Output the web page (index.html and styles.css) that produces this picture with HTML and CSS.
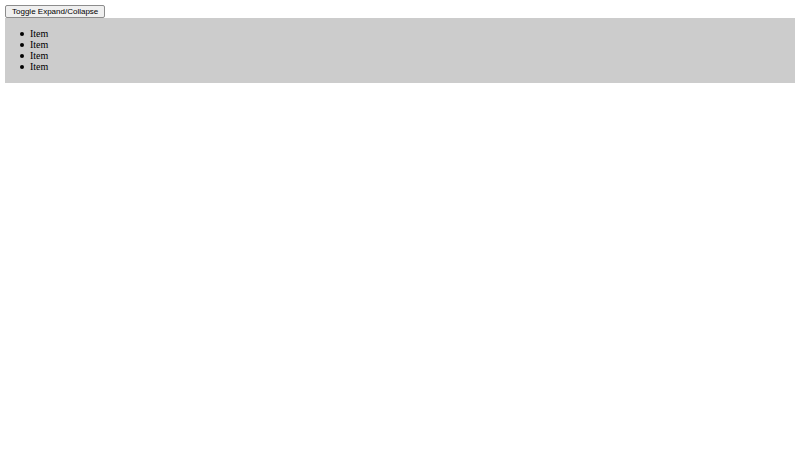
FILE: index.html
```html
<!DOCTYPE html>
<html lang="en">
<head>
    <meta charset="UTF-8">
    <meta name="viewport" content="width=device-width, initial-scale=1.0">
    <title>Expand/Collapse</title>
    <link rel="stylesheet" href="styles.css">
</head>
<body>
    <button type="button" class="toggle" aria-expanded="true" aria-controls="panel" onclick="togglePanel(this)">Toggle Expand/Collapse</button>
    <div class="panel" id="panel">
        <ul class="list">
            <li>Item</li>
            <li>Item</li>
            <li>Item</li>
            <li>Item</li>
        </ul>
    </div>

    <script>
        function togglePanel(button) {
            const panel = document.getElementById('panel');
            panel.hidden = !panel.hidden;
            button.setAttribute('aria-expanded', String(!panel.hidden));
        }
    </script>
</body>
</html>
```
FILE: styles.css
```css
body {
    margin: 5px;
    background: #fff;
    color: #000;
    font-family: "Liberation Serif", "Times New Roman", serif;
    font-size: 10px;
    line-height: 11px;
}

.toggle {
    display: block;
    padding: 1px 6px;
    border: 1px solid #8c8c8c;
    border-radius: 2px;
    background: #efefef;
    color: #000;
    font-family: "Liberation Sans", Arial, sans-serif;
    font-size: 8px;
    line-height: 9px;
}

.panel {
    overflow: hidden;
    background: #ccc;
}

.list {
    margin: 10px 0 11px;
    padding-left: 15px;
    list-style: none;
}

.list li {
    display: flex;
    align-items: center;
    gap: 6px;
}

/* round bullet */
.list li::before {
    content: "";
    width: 4px;
    height: 4px;
    border-radius: 50%;
    background: #000;
}
```
